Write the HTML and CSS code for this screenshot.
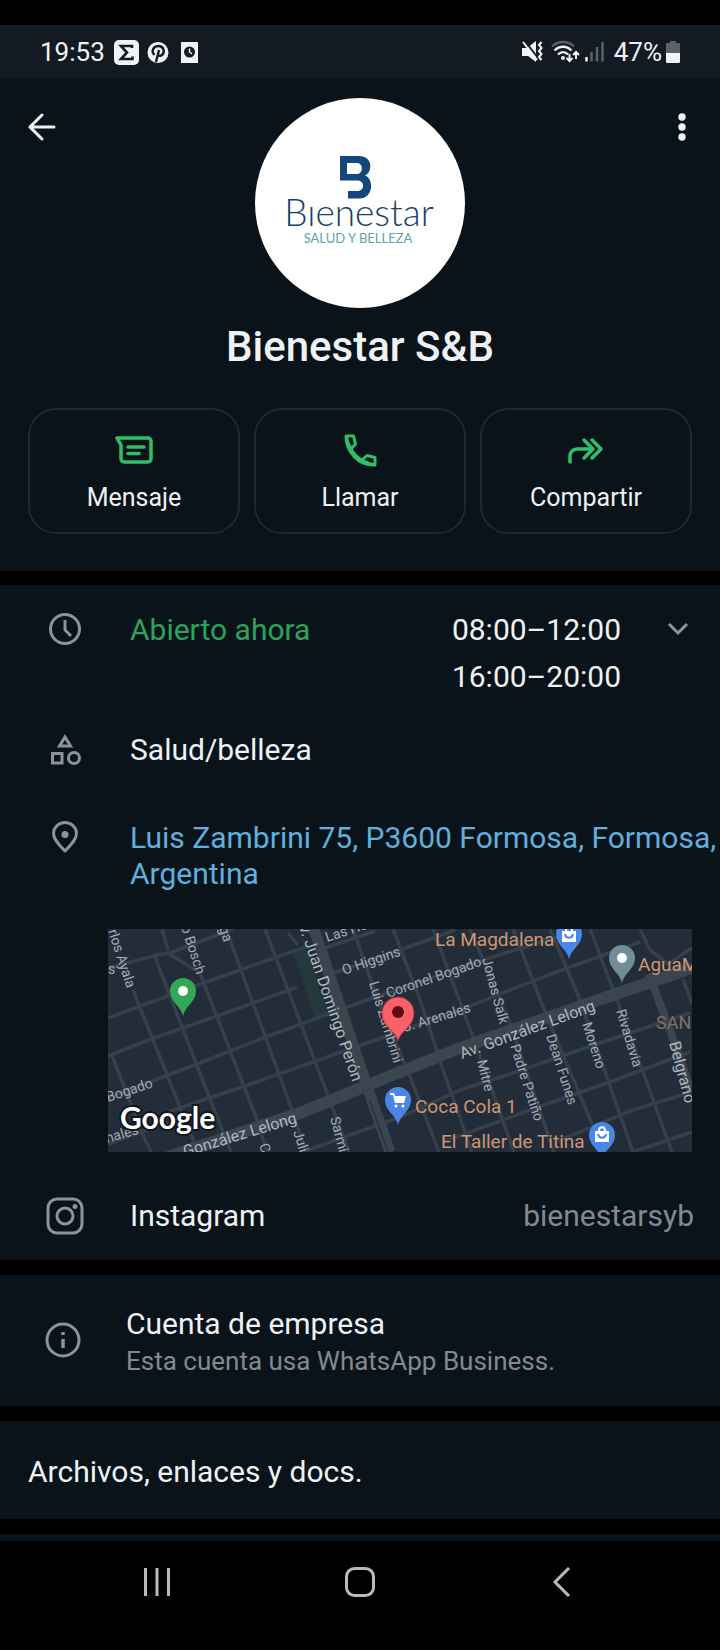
FILE: index.html
```html
<!DOCTYPE html>
<html lang="es">
<head>
    <meta charset="UTF-8">
    <meta name="viewport" content="width=device-width, initial-scale=1.0">
    <title>Bienestar S&amp;B</title>
    <link rel="stylesheet" href="styles.css">
</head>
<body>
    <div class="status-bar">
        <div class="status-left">
            <span>19:53</span>
            <svg class="status-apps" width="86" height="26" viewBox="0 0 86 26">
                <rect x="0" y="1" width="25" height="25" rx="5" fill="#f1f4f6"/>
                <path d="M18 9V7H7l6 6.500-6 6.500h11.500v-2.500" fill="none" stroke="#141a21" stroke-width="2.600"/>
                <circle cx="44" cy="13.500" r="10.500" fill="#f1f4f6"/>
                <path d="M40.500 16c-4-4-1-9 4-9s7 6 3.500 9c-2 1.600-4 .5-4-.8M45 11l-3 12" fill="none" stroke="#141a21" stroke-width="2.400"/>
                <rect x="67" y="3" width="17" height="21" fill="#f1f4f6"/>
                <circle cx="75.500" cy="13" r="5.500" fill="#141a21"/>
                <path d="M75.500 9.500V13l2.500 2" fill="none" stroke="#f1f4f6" stroke-width="1.500"/>
            </svg>
        </div>
        <div class="status-right">
            <svg width="82" height="24" viewBox="0 0 82 24">
                <!-- sound off -->
                <path d="M0 8h5l9-7v21l-8-6H0z" fill="#f1f4f6"/>
                <path d="M2 0l14 18" stroke="#141a21" stroke-width="2"/>
                <path d="M1 2l14 18" stroke="#f1f4f6" stroke-width="2"/>
                <path d="M19.500 2l-2.500 3 2.500 3-2.500 3 2.500 3-2.500 3 2.500 3" fill="none" stroke="#f1f4f6" stroke-width="2"/>
                <!-- wifi -->
                <g fill="none" stroke-width="2.400">
                    <path d="M30 6.500c6-6 16-6 22 0" stroke="#5a6168"/>
                    <path d="M32.500 10.500c5-5 12-5 17 0M36 14.500c3-3 7-3 10 0" stroke="#f1f4f6"/>
                    <path d="M47.500 14v7m-3-3l3 3 3-3M54 19v-7m-3 3l3-3 3 3" stroke="#f1f4f6" stroke-width="2"/>
                </g>
                <circle cx="41" cy="18" r="2" fill="#f1f4f6"/>
                <!-- signal -->
                <path d="M64.500 17v4.500" stroke="#f1f4f6" stroke-width="2.500"/>
                <path d="M69.500 12v9.500M75 7v14.500M80.500 2v19.500" stroke="#5a6168" stroke-width="2.500"/>
            </svg>
            <span>47%</span>
            <svg width="14" height="22" viewBox="0 0 14 22">
                <path d="M4 0h6v2h3a1 1 0 0 1 1 1v10H0V3a1 1 0 0 1 1-1h3z" fill="#5a6168"/>
                <path d="M0 12h14v8.500a1.500 1.500 0 0 1-1.500 1.500h-11A1.500 1.500 0 0 1 0 20.500z" fill="#f1f4f6"/>
            </svg>
        </div>
    </div>

    <header class="panel profile">
        <div class="profile-top">
            <button type="button" class="icon-button" aria-label="Atrás">
                <svg width="28" height="28" viewBox="0 0 28 28" fill="none" stroke="#eef2f4" stroke-width="3" stroke-linecap="round" stroke-linejoin="round">
                    <path d="M26 14H2M14 2L2 14l12 12"/>
                </svg>
            </button>
            <svg class="avatar" viewBox="0 0 210 210" role="img" aria-label="Bienestar salud y belleza">
                <circle cx="105" cy="105" r="105" fill="#fff"/>
                <path d="M85 58h19c14 0 14 16 6 19.500 9 3 9 23-6 23H93V93h9.500c7.500 0 7.500-10.500 0-10.500H85zM92 65v11h10c6.500 0 6.500-11 0-11z" fill="#14477c" fill-rule="evenodd"/>
                <text class="logo-name" x="104" y="128" text-anchor="middle">Bıenestar</text>
                <text class="logo-sub" x="103" y="145" text-anchor="middle">SALUD Y BELLEZA</text>
            </svg>
            <button type="button" class="icon-button" aria-label="Más opciones">
                <svg width="28" height="28" viewBox="0 0 28 28" fill="#eef2f4">
                    <circle cx="18" cy="4" r="3.700"/>
                    <circle cx="18" cy="14" r="3.700"/>
                    <circle cx="18" cy="24" r="3.700"/>
                </svg>
            </button>
        </div>
        <h1>Bienestar S&amp;B</h1>
        <div class="actions">
            <button type="button" class="action">
                <svg width="38" height="36" viewBox="0 0 38 36" fill="none" stroke="#2fbf68" stroke-width="3.500" stroke-linejoin="round" stroke-linecap="round">
                    <path d="M2 6h31a3 3 0 0 1 3 3v18a3 3 0 0 1-3 3H9a3 3 0 0 1-3-3V13zM13 15h16M13 21.500h11"/>
                </svg>
                <span>Mensaje</span>
            </button>
            <button type="button" class="action">
                <svg width="36" height="36" viewBox="0 0 36 36" fill="none" stroke="#2fbf68" stroke-width="3" stroke-linejoin="round">
                    <path d="M4 4h7.500l2 8-4.500 5c2.500 5 6 8.500 11 11l5-4.500 8 2V33C17 34 4 20 4 4zM9 17C6.500 12 5 8 4 4M20 28c4 3 9 4 13 5"/>
                </svg>
                <span>Llamar</span>
            </button>
            <button type="button" class="action">
                <svg width="36" height="36" viewBox="0 0 36 36" fill="none" stroke="#2fbf68" stroke-width="3.500" stroke-linejoin="round" stroke-linecap="round">
                    <path d="M2 30v-6a7 7 0 0 1 7-7h15M16 8l9 9-9 9M24 8l9 9-9 9"/>
                </svg>
                <span>Compartir</span>
            </button>
        </div>
    </header>

    <main>
        <section class="panel details">
            <div class="row hours">
                <svg class="row-icon" viewBox="0 0 40 36" fill="none" stroke="#8c949a" stroke-width="3">
                    <circle cx="20" cy="18" r="14.500"/>
                    <path d="M20 9v10l6 6"/>
                </svg>
                <span class="open">Abierto ahora</span>
                <span class="times">08:00–12:00<br>16:00–20:00</span>
                <button type="button" class="expand" aria-label="Ver horarios">
                    <svg width="22" height="14" viewBox="0 0 22 14" fill="none" stroke="#8c949a" stroke-width="3">
                        <path d="M2 2l9 9 9-9"/>
                    </svg>
                </button>
            </div>
            <div class="row category">
                <svg class="row-icon" viewBox="0 0 40 36" fill="none" stroke="#8c949a" stroke-width="3">
                    <path d="M20 5l-5.500 9h11zM7.500 21.500h9.500v9.500H7.500z"/>
                    <circle cx="29" cy="26" r="5.500"/>
                </svg>
                <span>Salud/belleza</span>
            </div>
            <div class="row address">
                <svg class="row-icon" viewBox="0 0 40 36" fill="none" stroke="#8c949a" stroke-width="3">
                    <path d="M20 31C13 24 8.500 19 8.500 13.500a11.500 11 0 0 1 23 0C31.500 19 27 24 20 31z" stroke-linejoin="round"/>
                    <circle cx="20" cy="14.500" r="3.500" fill="#8c949a" stroke="none"/>
                </svg>
                <a href="#mapa">Luis Zambrini 75, P3600 Formosa, Formosa, Argentina</a>
            </div>

            <svg class="map" id="mapa" viewBox="0 0 584 223" role="img" aria-label="Mapa">
                <defs>
                    <path id="pin" d="M0 25C-2 15-13 11-13 0a13 13 0 0 1 26 0C13 11 2 15 0 25z"/>
                </defs>
                <rect width="584" height="223" fill="#232d3a"/>
                <path d="M186 24l12-5 22 66-13 4z" fill="#25393d"/>
                <g fill="none" stroke="#35404b" stroke-width="3.500">
                    <!-- streets running east -->
                    <path d="M0 39l49-13 13-2L125 0M0 89l30-11 65-24 105-37M0 127l43-17 32-11 34-12 80-29M42 153l47-18 66-26 104-38 41-14 69-24 80-25M0 168l42-15"/>
                    <path d="M60 183l35-12 39-13 71-25 77-27 75-27 45-18 57-22 73-26M192 224l100-36 63-28 44-14 93-32 90-30M335 213l84-31 80-28 83-31M450 212l75-31 59-18M525 223l59-20M226 44l66-23 55-20M217 19l50-17M0 215l60-22"/>
                    <!-- streets running south -->
                    <path d="M3 124l30 78 10 21M25 61l65 162M47 28l58 150 18 45M54 0l6 21M60 24l32 20 57 147 10 32M118 0l66 181 14 42M157 0l62 164 22 59M245 0l28 80 26 60 32 83M285 0l27 71 22 67 30 85M325 0l40 108 41 115M362 0l40 94 44 129M405 0l34 88 57 135M442 0l30 71 53 152M482 0l27 71 55 152M532 0l10 21 18 14 24-16M575 50l9 25M180 4l10 12"/>
                </g>
                <g fill="none" stroke="#3a454f">
                    <path d="M60 228l132-44 100-41 60-24 153-53 79-27" stroke-width="12"/>
                    <path d="M206 0l54 160 22 63" stroke-width="11"/>
                    <path d="M541 45l26 70 17 50" stroke-width="8"/>
                </g>
                <path d="M262 172l18 51" fill="none" stroke="#2b3641" stroke-width="2"/>

                <g class="street">
                    <text transform="translate(0 2) rotate(72)">rlos Ayala</text>
                    <text x="0" y="45">s</text>
                    <text transform="translate(73 -2) rotate(72)">o Bosch</text>
                    <text transform="translate(111 -1) rotate(72)">ga</text>
                    <text transform="translate(219 13) rotate(-18)">Las Heras</text>
                    <text transform="translate(236 46) rotate(-19)">O Higgins</text>
                    <text transform="translate(261 54) rotate(73)">Luis Zambrini</text>
                    <text transform="translate(280 69) rotate(-19)">Coronel Bogado</text>
                    <text transform="translate(297 103) rotate(-17)">J. Arenales</text>
                    <text transform="translate(374 30) rotate(75)">Jonas Salk</text>
                    <text transform="translate(369 132) rotate(76)">Mitre</text>
                    <text transform="translate(402 117) rotate(72)">Padre Patiño</text>
                    <text transform="translate(438 107) rotate(72)">Dean Funes</text>
                    <text transform="translate(474 95) rotate(72)">Moreno</text>
                    <text transform="translate(508 82) rotate(73)">Rivadavia</text>
                    <text transform="translate(0 173) rotate(-18)">Bogado</text>
                    <text transform="translate(-8 216) rotate(-16)">enales</text>
                    <text transform="translate(151 216) rotate(72)">C</text>
                    <text transform="translate(185 203) rotate(72)">Julio</text>
                    <text transform="translate(222 189) rotate(75)">Sarmiento</text>
                </g>
                <g class="avenue">
                    <text transform="translate(191 -2) rotate(71)">v. Juan Domingo Perón</text>
                    <text transform="translate(354 130) rotate(-20)">Av. González Lelong</text>
                    <text transform="translate(77 228) rotate(-17)">González Lelong</text>
                    <text transform="translate(561 114) rotate(75)">Belgrano</text>
                </g>
                <g class="place">
                    <text x="327" y="17">La Magdalena</text>
                    <text x="530" y="42">AguaMarina</text>
                    <text x="307" y="184">Coca Cola 1</text>
                    <text x="333" y="219">El Taller de Titina</text>
                </g>
                <text class="district" x="548" y="100">SAN</text>

                <use href="#pin" x="75" y="62" fill="#31a853"/>
                <circle cx="75" cy="62" r="5" fill="#fff"/>
                <use href="#pin" x="514" y="29" fill="#718d98"/>
                <circle cx="514" cy="29" r="5" fill="#fff"/>
                <g fill="#4a86e8">
                    <use href="#pin" x="461" y="5"/>
                    <use href="#pin" x="290" y="171"/>
                    <use href="#pin" x="494" y="206"/>
                </g>
                <g fill="#fff">
                    <path d="M454 2h14v11h-14zM487 202h14v11h-14zM282 164h4l1 3h11l-2 7h-9l-2-8h-3z"/>
                    <circle cx="288" cy="177" r="1.500"/>
                    <circle cx="295" cy="177" r="1.500"/>
                </g>
                <path d="M457 5c1 5 7 5 8 0M490 205c1 5 7 5 8 0" fill="none" stroke="#4a86e8" stroke-width="2"/>
                <path d="M458 2c0-5 6-5 6 0M491 202c0-5 6-5 6 0" fill="none" stroke="#fff" stroke-width="2"/>
                <path d="M290 112c-2-10-16-14-16-28a16 16 0 0 1 32 0c0 14-14 18-16 28z" fill="#fb5f68" stroke="#b5333d" stroke-width="1"/>
                <circle cx="290" cy="83" r="6" fill="#5c0d16"/>
                <text class="google" x="12" y="200">Google</text>
            </svg>

            <div class="row instagram">
                <svg class="row-icon" viewBox="0 0 40 36" fill="none" stroke="#8c949a" stroke-width="3">
                    <rect x="3" y="1" width="34" height="34" rx="9"/>
                    <circle cx="20" cy="18" r="8"/>
                    <circle cx="30" cy="8.500" r="2.500" fill="#8c949a" stroke="none"/>
                </svg>
                <span>Instagram</span>
                <a class="handle" href="#instagram">bienestarsyb</a>
            </div>
        </section>

        <section class="panel account">
            <svg class="row-icon" viewBox="0 0 40 36" fill="none" stroke="#8c949a" stroke-width="3">
                <circle cx="20" cy="18" r="16"/>
                <path d="M20 17v9M20 10v3" stroke-width="3.500"/>
            </svg>
            <div>
                <h2>Cuenta de empresa</h2>
                <p>Esta cuenta usa WhatsApp Business.</p>
            </div>
        </section>

        <section class="panel files">
            <h2>Archivos, enlaces y docs.</h2>
        </section>

        <div class="panel next-panel"></div>
    </main>

    <nav class="system-nav">
        <button type="button" aria-label="Recientes">
            <svg width="30" height="30" viewBox="0 0 30 30" fill="none" stroke="#b9b9b9" stroke-width="3">
                <path d="M3.500 1v28M15 1v28M26.500 1v28"/>
            </svg>
        </button>
        <button type="button" aria-label="Inicio">
            <svg width="30" height="30" viewBox="0 0 30 30" fill="none" stroke="#b9b9b9" stroke-width="3">
                <rect x="1.500" y="1.500" width="27" height="27" rx="8"/>
            </svg>
        </button>
        <button type="button" aria-label="Volver">
            <svg width="30" height="30" viewBox="0 0 30 30" fill="none" stroke="#b9b9b9" stroke-width="3">
                <path d="M21 1L7 15l14 14"/>
            </svg>
        </button>
    </nav>
</body>
</html>
```
FILE: styles.css
```css
* {
    padding: 0;
    margin: 0;
    box-sizing: border-box;
}
body {
    background-color: #000000;
    color: #eef2f4;
    font-family: Roboto, "Liberation Sans", sans-serif;
    font-size: 30px;
    line-height: 36px;
    padding-top: 25px;
}
svg {
    display: block;
    flex-shrink: 0;
}
button {
    background: none;
    border: none;
    color: inherit;
    font: inherit;
    cursor: pointer;
}
a {
    color: inherit;
    text-decoration: none;
}
h2 {
    font-size: 30px;
    font-weight: 400;
}
.panel {
    background-color: #0b131a;
    margin-bottom: 15px;
}

/* status bar */
.status-bar {
    display: flex;
    justify-content: space-between;
    align-items: center;
    height: 53px;
    padding: 0 40px;
    background-color: #141a21;
    font-size: 26px;
}
.status-left,
.status-right {
    display: flex;
    align-items: center;
}
.status-left {
    gap: 9px;
}
.status-right {
    gap: 4px;
}
.status-right span {
    margin-left: 6px;
}

/* profile */
.profile {
    padding: 20px 28px 37px;
    margin-bottom: 14px;
}
.profile-top {
    display: flex;
    justify-content: space-between;
    align-items: flex-start;
}
.icon-button {
    margin-top: 15px;
}
.avatar {
    width: 210px;
    height: 210px;
}
.logo-name {
    font-family: Lato, sans-serif;
    font-size: 37px;
    font-weight: 300;
    fill: #1c3f66;
}
.logo-sub {
    font-family: Lato, sans-serif;
    font-size: 13px;
    fill: #5fa3ac;
}
h1 {
    margin: 14px 0 36px;
    font-size: 42px;
    font-weight: 500;
    line-height: 50px;
    text-align: center;
}
.actions {
    display: grid;
    grid-template-columns: repeat(3, 1fr);
    gap: 14px;
}
.action {
    display: flex;
    flex-direction: column;
    align-items: center;
    gap: 14px;
    padding: 22px 8px 18px;
    border: 2px solid #20272e;
    border-radius: 28px;
    font-size: 25px;
    line-height: 32px;
}

/* details */
.details {
    padding: 21px 0 26px;
}
.row {
    display: flex;
    align-items: flex-start;
    padding-left: 45px;
    padding-right: 26px;
}
.row-icon {
    width: 40px;
    height: 36px;
    margin-right: 45px;
    overflow: visible;
}
.hours {
    line-height: 47px;
    padding-right: 31px;
}
.hours .row-icon {
    margin-top: 5px;
}
.open {
    color: #2aa35c;
}
.times {
    margin-left: auto;
}
.expand {
    display: flex;
    align-items: center;
    height: 45px;
    margin-left: 46px;
}
.category {
    margin-top: 32px;
}
.address {
    margin-top: 52px;
    padding-right: 0;
    color: #5fb0dc;
}
.map {
    width: calc(100% - 136px);
    margin: 37px 28px 46px 108px;
}
.handle {
    margin-left: auto;
    color: #828a90;
}

/* map labels */
.street {
    font-size: 14px;
    fill: #a3acb4;
}
.avenue {
    font-size: 16px;
    fill: #b0b8bf;
}
.place {
    font-size: 19px;
    fill: #cf9672;
}
.district {
    font-size: 18px;
    fill: #806f66;
}
.google {
    font-family: Lato, sans-serif;
    font-size: 30px;
    font-weight: 700;
    fill: #ffffff;
    stroke: #11161c;
    stroke-width: 4px;
    paint-order: stroke;
}

/* account and files */
.account {
    display: flex;
    align-items: center;
    padding: 31px 28px 27px 43px;
}
.account .row-icon {
    margin-right: 43px;
    margin-bottom: 6px;
}
.account p {
    color: #828a90;
    font-size: 26px;
    margin-top: 1px;
}
.files {
    padding: 33px 28px 29px;
}
.next-panel {
    height: 7px;
    margin-bottom: 0;
}

/* system navigation */
.system-nav {
    display: grid;
    grid-template-columns: repeat(3, 1fr);
    justify-items: center;
    padding: 26px 56px 0;
}
```
